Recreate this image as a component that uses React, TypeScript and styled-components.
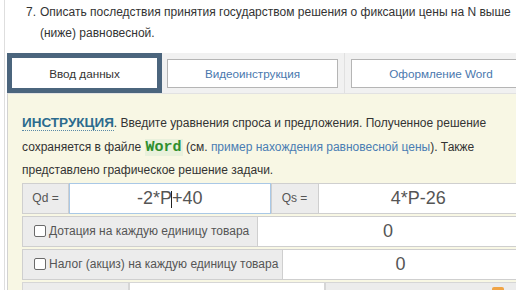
import React from "react";
import styled, { createGlobalStyle } from "styled-components";

const Global = createGlobalStyle`
  html, body { margin: 0; padding: 0; background: #ffffff; overflow: hidden; }
  body { font-family: "Liberation Sans", Arial, sans-serif; color: #333; }
`;

const Page = styled.div`
  margin-left: 4px;
  border-left: 1px solid #dedede;
  padding-left: 2px;
  width: 560px;
  height: 290px;
  overflow: hidden;
`;

const Question = styled.div`
  display: flex;
  padding: 2px 0 0 19px;
  font-size: 12px;
  line-height: 21px;
  color: #333;
  margin-bottom: 9px;
  white-space: nowrap;
`;

const Num = styled.span`
  width: 14px;
  flex: none;
`;

const TabBar = styled.div`
  display: flex;
  align-items: flex-start;
  height: 40px;
  background: #f1f1f1;
`;

const ActiveTab = styled.div`
  width: 155px;
  height: 40px;
  box-sizing: border-box;
  padding: 5px;
  background: #4b657d;
  flex: none;
`;

const ActiveInner = styled.div`
  height: 30px;
  background: #fff;
  display: flex;
  align-items: center;
  justify-content: center;
  font-size: 11.7px;
  color: #333;
`;

const Tab = styled.div<{ $w: number; $ml: number }>`
  width: ${(p) => p.$w}px;
  margin-left: ${(p) => p.$ml}px;
  margin-top: 6px;
  height: 29px;
  box-sizing: border-box;
  border: 1px solid #b5b5b5;
  background: #fff;
  display: flex;
  align-items: center;
  justify-content: center;
  font-size: 11.7px;
  color: #4a78ae;
  flex: none;
`;

const Divider = styled.div`
  width: 1px;
  height: 40px;
  background: #e0e0e0;
  margin-left: 6px;
  flex: none;
`;

const Panel = styled.div`
  border-left: 1px solid #d2d2d2;
  border-top: 1px solid #e2e2e2;
  background: #f8f7e4;
  padding: 17px 0 0 14px;
  height: 200px;
`;

const Instruction = styled.div`
  font-size: 12px;
  line-height: 23.5px;
  color: #333;
  white-space: nowrap;
`;

const Head = styled.span`
  font-weight: bold;
  font-size: 13.5px;
  color: #2b6b8e;
  border-bottom: 1px dotted #5a8aa6;
`;

const Code = styled.span`
  font-family: "Liberation Mono", "Courier New", monospace;
  font-weight: bold;
  font-size: 15px;
  color: #2f8f2f;
  background: #e9f1dc;
  padding: 0 1px;
`;

const Link = styled.a`
  color: #4a7db3;
  text-decoration: none;
`;

const Row = styled.div`
  display: flex;
  width: 497px;
  height: 31px;
  margin-bottom: 2px;
`;

const Label = styled.label<{ $w?: number }>`
  flex: none;
  ${(p) => (p.$w ? `width: ${p.$w}px;` : "")}
  box-sizing: border-box;
  display: flex;
  align-items: center;
  justify-content: center;
  padding: 0 10px;
  background: #ececec;
  border: 1px solid #cfcfcf;
  font-size: 12px;
  color: #555;
  white-space: nowrap;
`;

const CheckLabel = styled(Label)`
  justify-content: flex-start;
`;

const Box = styled.input`
  appearance: none;
  width: 12px;
  height: 12px;
  margin: 0 3px 0 1px;
  border: 1px solid #6a6a6a;
  border-radius: 2px;
  background: #fff;
  flex: none;
`;

const Field = styled.div<{ $focus?: boolean }>`
  position: relative;
  flex: 1;
  min-width: 0;
  box-sizing: border-box;
  border: 1px solid ${(p) => (p.$focus ? "#a9c8e6" : "#cfcfcf")};
  border-left-width: ${(p) => (p.$focus ? "1px" : "0")};
  background: #fff;
`;

const Input = styled.input`
  width: 100%;
  height: 100%;
  box-sizing: border-box;
  border: none;
  outline: none;
  background: transparent;
  text-align: center;
  font-family: "Liberation Sans", Arial, sans-serif;
  font-size: 18px;
  color: #555;
  padding: 0;
`;

const Caret = styled.span`
  position: absolute;
  left: calc(50% + 1px);
  top: 7px;
  width: 1px;
  height: 17px;
  background: #222;
`;

const Blank = styled.div<{ $w?: number; $gray?: boolean }>`
  ${(p) => (p.$w ? `width: ${p.$w}px; flex: none;` : "flex: 1;")}
  box-sizing: border-box;
  border: 1px solid #d6d6d6;
  background: ${(p) => (p.$gray ? "#ececec" : "#fff")};
  position: relative;
`;

const Orange = styled.span`
  position: absolute;
  right: 14px;
  top: 4px;
  width: 12px;
  height: 14px;
  border-radius: 2px;
  background: #f0a445;
`;

export default function App() {
  return (
    <>
      <Global />
      <Page>
        <Question>
          <Num>7.</Num>
          <span>
            Описать последствия принятия государством решения о фиксации цены на N выше
            <br />
            (ниже) равновесной.
          </span>
        </Question>
        <TabBar>
          <ActiveTab>
            <ActiveInner>Ввод данных</ActiveInner>
          </ActiveTab>
          <Tab $w={171} $ml={5}>Видеоинструкция</Tab>
          <Divider />
          <Tab $w={180} $ml={6}>Оформление Word</Tab>
        </TabBar>
        <Panel>
          <Instruction>
            <Head>ИНСТРУКЦИЯ</Head>. Введите уравнения спроса и предложения. Полученное решение
            <br />
            сохраняется в файле <Code>Word</Code> (см.{" "}
            <Link href="#">пример нахождения равновесной цены</Link>). Также
            <br />
            представлено графическое решение задачи.
          </Instruction>
          <Row>
            <Label $w={47}>Qd =</Label>
            <Field $focus>
              <Input defaultValue="-2*P+40" />
              <Caret />
            </Field>
            <Label $w={48}>Qs =</Label>
            <Field>
              <Input defaultValue="4*P-26" />
            </Field>
          </Row>
          <Row>
            <CheckLabel $w={236}>
              <Box type="checkbox" />
              Дотация на каждую единицу товара
            </CheckLabel>
            <Field>
              <Input defaultValue="0" />
            </Field>
          </Row>
          <Row>
            <CheckLabel $w={261}>
              <Box type="checkbox" />
              Налог (акциз) на каждую единицу товара
            </CheckLabel>
            <Field>
              <Input defaultValue="0" />
            </Field>
          </Row>
          <Row>
            <Blank $w={107} $gray />
            <Blank $w={196} />
            <Blank $gray>
              <Orange />
            </Blank>
          </Row>
        </Panel>
      </Page>
    </>
  );
}
